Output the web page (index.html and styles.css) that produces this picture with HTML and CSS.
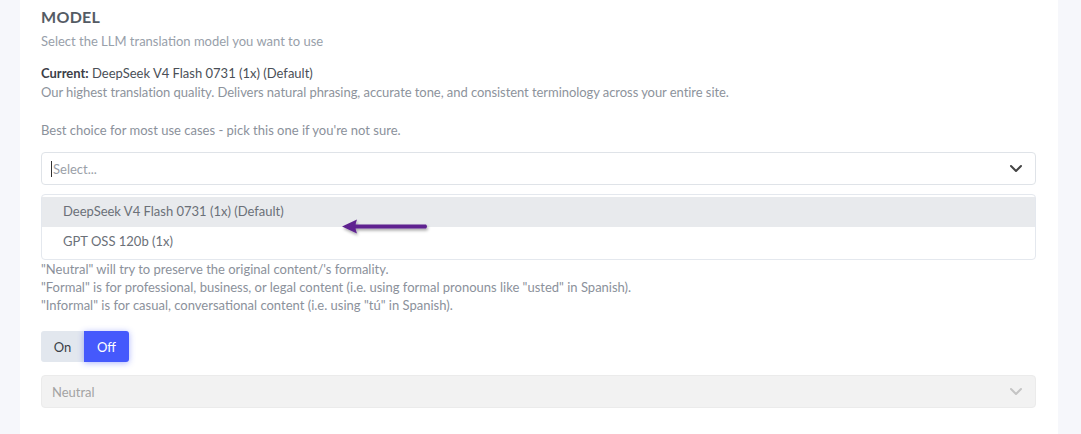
FILE: index.html
```html
<!DOCTYPE html>
<html lang="en">

<head>
    <meta charset="UTF-8">
    <meta name="viewport" content="width=device-width, initial-scale=1.0">
    <title>Model settings</title>
    <link rel="stylesheet" href="styles.css">
</head>

<body>
    <div class="page">
        <section class="card">
            <h3 class="title">MODEL</h3>
            <p class="sub">Select the LLM translation model you want to use</p>

            <div class="current">
                <div><b>Current:</b> DeepSeek V4 Flash 0731 (1x) (Default)</div>
                <div class="muted">Our highest translation quality. Delivers natural phrasing, accurate tone, and consistent terminology across your entire site.</div>
            </div>
            <p class="best">Best choice for most use cases - pick this one if you're not sure.</p>

            <div class="select">
                <span class="caret"></span>
                <span class="placeholder">Select...</span>
                <svg class="chev" width="14" height="9" viewBox="0 0 14 9">
                    <path d="M2 2 L7 7 L12 2" fill="none" stroke="#444" stroke-width="2" stroke-linecap="round" stroke-linejoin="round" />
                </svg>
            </div>

            <div class="menu-wrap">
                <ul class="menu">
                    <li class="active">DeepSeek V4 Flash 0731 (1x) (Default)</li>
                    <li>GPT OSS 120b (1x)</li>
                </ul>
                <svg class="pointer" width="110" height="30" viewBox="0 0 110 30">
                    <defs>
                        <filter id="sh" x="-20%" y="-50%" width="140%" height="200%">
                            <feDropShadow dx="1" dy="2" stdDeviation="1.6" flood-color="#000" flood-opacity="0.35" />
                        </filter>
                    </defs>
                    <g filter="url(#sh)">
                        <path d="M16 10.5 L88 10.5 Q90 12.5 88 14.5 L16 14.5 Z" fill="#5e2490" />
                        <path d="M4 12.5 L19 5.5 Q16 12.5 19 19.5 Z" fill="#5e2490" />
                    </g>
                </svg>
            </div>

            <div class="help">
                <div>"Neutral" will try to preserve the original content/'s formality.</div>
                <div>"Formal" is for professional, business, or legal content (i.e. using formal pronouns like "usted" in Spanish).</div>
                <div>"Informal" is for casual, conversational content (i.e. using "tú" in Spanish).</div>
            </div>

            <div class="toggle">
                <button class="btn">On</button>
                <button class="btn on">Off</button>
            </div>

            <div class="select disabled">
                <span class="placeholder">Neutral</span>
                <svg class="chev" width="14" height="9" viewBox="0 0 14 9">
                    <path d="M2 2 L7 7 L12 2" fill="none" stroke="#c4c4c4" stroke-width="2" stroke-linecap="round" stroke-linejoin="round" />
                </svg>
            </div>
        </section>
    </div>
</body>

</html>
```

FILE: styles.css
```css
* {
    box-sizing: border-box;
}

body {
    margin: 0;
    background-color: #f6f7fb;
    font-family: Lato, "Open Sans", sans-serif;
    font-size: 13px;
    color: #8b919b;
}

.page {
    padding: 0 23px 0 20px;
    height: 434px;
    overflow: hidden;
}

.card {
    background-color: #fff;
    height: 100%;
    padding: 7px 22px 0 21px;
}

.title {
    margin: 0;
    font-size: 16px;
    line-height: 20px;
    font-weight: 700;
    color: #545b64;
    letter-spacing: 0.3px;
}

.sub {
    margin: 5px 0 0;
    line-height: 18px;
    color: #98a0aa;
}

.current {
    margin-top: 14px;
    line-height: 19px;
    color: #4a4f57;
}

.current b {
    color: #3c4048;
}

.muted {
    color: #8d939c;
    letter-spacing: -0.06px;
}

.best {
    margin: 19px 0 0;
    line-height: 18px;
}

.select {
    margin-top: 13px;
    height: 33px;
    border: 1px solid #dfe3e8;
    border-radius: 4px;
    display: flex;
    align-items: center;
    padding: 0 12px 0 9px;
    background: #fff;
}

.caret {
    width: 1px;
    height: 16px;
    background: #333;
    margin-right: 1px;
}

.placeholder {
    flex: 1;
    color: #9aa0a8;
}

.menu-wrap {
    position: relative;
    margin-top: 9px;
}

.menu {
    list-style: none;
    margin: 0;
    padding: 2px 0;
    border: 1px solid #e4e8ee;
    border-radius: 4px;
}

.menu li {
    height: 30px;
    line-height: 29px;
    padding-left: 21px;
    color: #6b7078;
}

.menu li.active {
    background-color: #e8eaed;
}

.pointer {
    position: absolute;
    left: 297px;
    top: 20px;
}

.help {
    line-height: 18px;
}

.toggle {
    margin-top: 17px;
    display: flex;
}

.btn {
    height: 31px;
    border: 0;
    font-family: inherit;
    font-size: 13px;
    padding: 0;
    background-color: #e2e7ee;
    color: #3a3f47;
    width: 43px;
    border-radius: 3px 0 0 3px;
}

.btn.on {
    width: 45px;
    background-color: #4559fc;
    color: #fff;
    border-radius: 0 3px 3px 0;
    box-shadow: 0 1px 6px rgba(69, 89, 252, 0.45);
}

.select.disabled {
    background-color: #f2f2f2;
    border-color: #ebebeb;
    padding-left: 10px;
}

.select.disabled .placeholder {
    color: #a3a3a3;
}
```
